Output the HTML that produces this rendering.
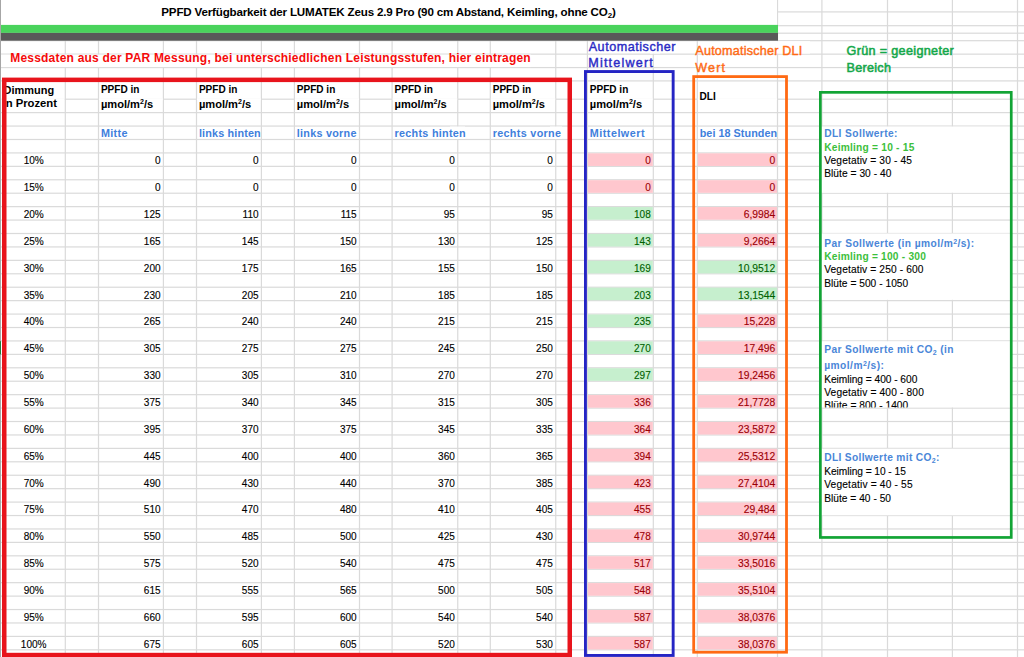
<!DOCTYPE html>
<html><head><meta charset="utf-8"><title>PPFD</title>
<style>html,body{margin:0;padding:0;background:#fff;overflow:hidden;width:1024px;height:657px}svg{display:block}text{font-family:"Liberation Sans",sans-serif}</style>
</head><body><svg width="1024" height="657" viewBox="0 0 1024 657" font-family="Liberation Sans, sans-serif"><rect x="0" y="0" width="1024" height="657" fill="#fff"/><rect x="777.50" y="11.30" width="246.50" height="1.2" fill="#DADADA"/><rect x="777.50" y="25.10" width="246.50" height="1.2" fill="#DADADA"/><rect x="1.00" y="32.60" width="1023.00" height="1.2" fill="#DADADA"/><rect x="1.00" y="40.10" width="1023.00" height="1.2" fill="#DADADA"/><rect x="1.00" y="53.54" width="1023.00" height="1.2" fill="#DADADA"/><rect x="1.00" y="66.97" width="1023.00" height="1.2" fill="#DADADA"/><rect x="1.00" y="80.30" width="1023.00" height="1.2" fill="#DADADA"/><rect x="1.00" y="98.60" width="1023.00" height="1.2" fill="#DADADA"/><rect x="1.00" y="112.03" width="1023.00" height="1.2" fill="#DADADA"/><rect x="1.00" y="125.46" width="1023.00" height="1.2" fill="#DADADA"/><rect x="1.00" y="138.89" width="1023.00" height="1.2" fill="#DADADA"/><rect x="1.00" y="152.32" width="1023.00" height="1.2" fill="#DADADA"/><rect x="1.00" y="165.75" width="1023.00" height="1.2" fill="#DADADA"/><rect x="1.00" y="179.18" width="1023.00" height="1.2" fill="#DADADA"/><rect x="1.00" y="192.61" width="1023.00" height="1.2" fill="#DADADA"/><rect x="1.00" y="206.04" width="1023.00" height="1.2" fill="#DADADA"/><rect x="1.00" y="219.47" width="1023.00" height="1.2" fill="#DADADA"/><rect x="1.00" y="232.90" width="1023.00" height="1.2" fill="#DADADA"/><rect x="1.00" y="246.33" width="1023.00" height="1.2" fill="#DADADA"/><rect x="1.00" y="259.76" width="1023.00" height="1.2" fill="#DADADA"/><rect x="1.00" y="273.19" width="1023.00" height="1.2" fill="#DADADA"/><rect x="1.00" y="286.62" width="1023.00" height="1.2" fill="#DADADA"/><rect x="1.00" y="300.05" width="1023.00" height="1.2" fill="#DADADA"/><rect x="1.00" y="313.48" width="1023.00" height="1.2" fill="#DADADA"/><rect x="1.00" y="326.91" width="1023.00" height="1.2" fill="#DADADA"/><rect x="1.00" y="340.34" width="1023.00" height="1.2" fill="#DADADA"/><rect x="1.00" y="353.77" width="1023.00" height="1.2" fill="#DADADA"/><rect x="1.00" y="367.20" width="1023.00" height="1.2" fill="#DADADA"/><rect x="1.00" y="380.63" width="1023.00" height="1.2" fill="#DADADA"/><rect x="1.00" y="394.06" width="1023.00" height="1.2" fill="#DADADA"/><rect x="1.00" y="407.49" width="1023.00" height="1.2" fill="#DADADA"/><rect x="1.00" y="420.92" width="1023.00" height="1.2" fill="#DADADA"/><rect x="1.00" y="434.35" width="1023.00" height="1.2" fill="#DADADA"/><rect x="1.00" y="447.78" width="1023.00" height="1.2" fill="#DADADA"/><rect x="1.00" y="461.21" width="1023.00" height="1.2" fill="#DADADA"/><rect x="1.00" y="474.64" width="1023.00" height="1.2" fill="#DADADA"/><rect x="1.00" y="488.07" width="1023.00" height="1.2" fill="#DADADA"/><rect x="1.00" y="501.50" width="1023.00" height="1.2" fill="#DADADA"/><rect x="1.00" y="514.93" width="1023.00" height="1.2" fill="#DADADA"/><rect x="1.00" y="528.36" width="1023.00" height="1.2" fill="#DADADA"/><rect x="1.00" y="541.79" width="1023.00" height="1.2" fill="#DADADA"/><rect x="1.00" y="555.22" width="1023.00" height="1.2" fill="#DADADA"/><rect x="1.00" y="568.65" width="1023.00" height="1.2" fill="#DADADA"/><rect x="1.00" y="582.08" width="1023.00" height="1.2" fill="#DADADA"/><rect x="1.00" y="595.51" width="1023.00" height="1.2" fill="#DADADA"/><rect x="1.00" y="608.94" width="1023.00" height="1.2" fill="#DADADA"/><rect x="1.00" y="622.37" width="1023.00" height="1.2" fill="#DADADA"/><rect x="1.00" y="635.80" width="1023.00" height="1.2" fill="#DADADA"/><rect x="1.00" y="649.23" width="1023.00" height="1.2" fill="#DADADA"/><rect x="64.70" y="0.00" width="1.2" height="657.00" fill="#DADADA"/><rect x="97.90" y="0.00" width="1.2" height="657.00" fill="#DADADA"/><rect x="162.80" y="0.00" width="1.2" height="657.00" fill="#DADADA"/><rect x="195.90" y="0.00" width="1.2" height="657.00" fill="#DADADA"/><rect x="260.80" y="0.00" width="1.2" height="657.00" fill="#DADADA"/><rect x="293.80" y="0.00" width="1.2" height="657.00" fill="#DADADA"/><rect x="358.90" y="0.00" width="1.2" height="657.00" fill="#DADADA"/><rect x="391.50" y="0.00" width="1.2" height="657.00" fill="#DADADA"/><rect x="457.15" y="0.00" width="1.2" height="657.00" fill="#DADADA"/><rect x="489.70" y="0.00" width="1.2" height="657.00" fill="#DADADA"/><rect x="555.15" y="0.00" width="1.2" height="657.00" fill="#DADADA"/><rect x="586.80" y="0.00" width="1.2" height="657.00" fill="#DADADA"/><rect x="652.70" y="0.00" width="1.2" height="657.00" fill="#DADADA"/><rect x="696.70" y="0.00" width="1.2" height="657.00" fill="#DADADA"/><rect x="776.90" y="0.00" width="1.2" height="657.00" fill="#DADADA"/><rect x="821.30" y="0.00" width="1.2" height="657.00" fill="#DADADA"/><rect x="886.90" y="0.00" width="1.2" height="657.00" fill="#DADADA"/><rect x="951.80" y="0.00" width="1.2" height="657.00" fill="#DADADA"/><rect x="1016.90" y="0.00" width="1.2" height="657.00" fill="#DADADA"/><rect x="1.00" y="0.00" width="776.00" height="25.70" fill="#fff"/><rect x="1.00" y="24.90" width="777.00" height="8.00" fill="#4AD35C"/><rect x="1.00" y="32.90" width="777.00" height="7.80" fill="#595959"/><rect x="1.00" y="54.64" width="530.00" height="12.43" fill="#fff"/><rect x="650.00" y="41.20" width="10.00" height="12.40" fill="#fff"/><rect x="770.00" y="41.20" width="40.00" height="12.40" fill="#fff"/><rect x="1.50" y="98.20" width="63.00" height="2.00" fill="#fff"/><rect x="99.00" y="98.20" width="63.90" height="2.00" fill="#fff"/><rect x="197.00" y="98.20" width="63.90" height="2.00" fill="#fff"/><rect x="294.90" y="98.20" width="64.10" height="2.00" fill="#fff"/><rect x="392.60" y="98.20" width="64.65" height="2.00" fill="#fff"/><rect x="490.80" y="98.20" width="64.45" height="2.00" fill="#fff"/><rect x="587.90" y="98.20" width="64.90" height="2.00" fill="#fff"/><rect x="697.80" y="98.20" width="79.20" height="2.00" fill="#fff"/><rect x="450.00" y="126.56" width="15.00" height="12.43" fill="#fff"/><rect x="550.00" y="126.56" width="12.00" height="12.43" fill="#fff"/><rect x="587.90" y="153.32" width="64.90" height="12.63" fill="#FFC7CE"/><rect x="697.80" y="153.32" width="79.20" height="12.63" fill="#FFC7CE"/><rect x="587.90" y="180.18" width="64.90" height="12.63" fill="#FFC7CE"/><rect x="697.80" y="180.18" width="79.20" height="12.63" fill="#FFC7CE"/><rect x="587.90" y="207.04" width="64.90" height="12.63" fill="#C6EFCE"/><rect x="697.80" y="207.04" width="79.20" height="12.63" fill="#FFC7CE"/><rect x="587.90" y="233.90" width="64.90" height="12.63" fill="#C6EFCE"/><rect x="697.80" y="233.90" width="79.20" height="12.63" fill="#FFC7CE"/><rect x="587.90" y="260.76" width="64.90" height="12.63" fill="#C6EFCE"/><rect x="697.80" y="260.76" width="79.20" height="12.63" fill="#C6EFCE"/><rect x="587.90" y="287.62" width="64.90" height="12.63" fill="#C6EFCE"/><rect x="697.80" y="287.62" width="79.20" height="12.63" fill="#C6EFCE"/><rect x="587.90" y="314.48" width="64.90" height="12.63" fill="#C6EFCE"/><rect x="697.80" y="314.48" width="79.20" height="12.63" fill="#FFC7CE"/><rect x="587.90" y="341.34" width="64.90" height="12.63" fill="#C6EFCE"/><rect x="697.80" y="341.34" width="79.20" height="12.63" fill="#FFC7CE"/><rect x="587.90" y="368.20" width="64.90" height="12.63" fill="#C6EFCE"/><rect x="697.80" y="368.20" width="79.20" height="12.63" fill="#FFC7CE"/><rect x="587.90" y="395.06" width="64.90" height="12.63" fill="#FFC7CE"/><rect x="697.80" y="395.06" width="79.20" height="12.63" fill="#FFC7CE"/><rect x="587.90" y="421.92" width="64.90" height="12.63" fill="#FFC7CE"/><rect x="697.80" y="421.92" width="79.20" height="12.63" fill="#FFC7CE"/><rect x="587.90" y="448.78" width="64.90" height="12.63" fill="#FFC7CE"/><rect x="697.80" y="448.78" width="79.20" height="12.63" fill="#FFC7CE"/><rect x="587.90" y="475.64" width="64.90" height="12.63" fill="#FFC7CE"/><rect x="697.80" y="475.64" width="79.20" height="12.63" fill="#FFC7CE"/><rect x="587.90" y="502.50" width="64.90" height="12.63" fill="#FFC7CE"/><rect x="697.80" y="502.50" width="79.20" height="12.63" fill="#FFC7CE"/><rect x="587.90" y="529.36" width="64.90" height="12.63" fill="#FFC7CE"/><rect x="697.80" y="529.36" width="79.20" height="12.63" fill="#FFC7CE"/><rect x="587.90" y="556.22" width="64.90" height="12.63" fill="#FFC7CE"/><rect x="697.80" y="556.22" width="79.20" height="12.63" fill="#FFC7CE"/><rect x="587.90" y="583.08" width="64.90" height="12.63" fill="#FFC7CE"/><rect x="697.80" y="583.08" width="79.20" height="12.63" fill="#FFC7CE"/><rect x="587.90" y="609.94" width="64.90" height="12.63" fill="#FFC7CE"/><rect x="697.80" y="609.94" width="79.20" height="12.63" fill="#FFC7CE"/><rect x="587.90" y="636.80" width="64.90" height="12.63" fill="#FFC7CE"/><rect x="697.80" y="636.80" width="79.20" height="12.63" fill="#FFC7CE"/><rect x="821.70" y="126.54" width="188.70" height="66.16" fill="#fff"/><rect x="821.70" y="233.50" width="188.70" height="66.30" fill="#fff"/><rect x="821.70" y="341.30" width="188.70" height="66.10" fill="#fff"/><rect x="821.70" y="448.70" width="188.70" height="66.60" fill="#fff"/><rect x="0.00" y="0.00" width="1.00" height="657.00" fill="#A6A6A6"/><rect x="0.00" y="341.20" width="1.00" height="13.20" fill="#1E7B3A"/><text x="161.30" y="15.90" font-size="11.6" font-weight="bold" fill="#000" textLength="454.50" lengthAdjust="spacing">PPFD Verfügbarkeit der LUMATEK Zeus 2.9 Pro (90 cm Abstand, Keimling, ohne CO<tspan font-size="8" dy="2">2</tspan><tspan dy="-2">)</tspan></text><text x="10.20" y="62.10" font-size="12.0" font-weight="bold" fill="#F50A0A" textLength="520.50" lengthAdjust="spacing">Messdaten aus der PAR Messung, bei unterschiedlichen Leistungsstufen, hier eintragen</text><text x="588.70" y="50.75" font-size="12.6" fill="#2A2AC4" textLength="86.80" lengthAdjust="spacing" stroke="#2A2AC4" stroke-width="0.4">Automatischer</text><text x="588.20" y="67.25" font-size="12.6" fill="#2A2AC4" textLength="64.60" lengthAdjust="spacing" stroke="#2A2AC4" stroke-width="0.4">Mittelwert</text><text x="695.30" y="54.60" font-size="12.6" fill="#FF6A13" textLength="107.00" lengthAdjust="spacing" stroke="#FF6A13" stroke-width="0.4">Automatischer DLI</text><text x="695.30" y="71.60" font-size="12.6" fill="#FF6A13" textLength="29.60" lengthAdjust="spacing" stroke="#FF6A13" stroke-width="0.4">Wert</text><text x="846.50" y="54.60" font-size="12.6" fill="#14A84A" textLength="107.30" lengthAdjust="spacing" stroke="#14A84A" stroke-width="0.55">Grün = geeigneter</text><text x="846.50" y="71.60" font-size="12.6" fill="#14A84A" textLength="44.40" lengthAdjust="spacing" stroke="#14A84A" stroke-width="0.55">Bereich</text><text x="3.60" y="94.06" font-size="10.1" font-weight="bold" fill="#000" textLength="50.50" lengthAdjust="spacingAndGlyphs">Dimmung</text><text x="2.50" y="107.30" font-size="10.1" font-weight="bold" fill="#000" textLength="54.50" lengthAdjust="spacingAndGlyphs">in Prozent</text><text x="100.90" y="92.80" font-size="10.1" font-weight="bold" fill="#000" textLength="38.50" lengthAdjust="spacingAndGlyphs">PPFD in</text><text x="100.90" y="107.70" font-size="10.1" font-weight="bold" fill="#000" textLength="52.30" lengthAdjust="spacingAndGlyphs">µmol/m<tspan font-size="6.4" dy="-3.6">2</tspan><tspan dy="3.6">/s</tspan></text><text x="198.90" y="92.80" font-size="10.1" font-weight="bold" fill="#000" textLength="38.50" lengthAdjust="spacingAndGlyphs">PPFD in</text><text x="198.90" y="107.70" font-size="10.1" font-weight="bold" fill="#000" textLength="52.30" lengthAdjust="spacingAndGlyphs">µmol/m<tspan font-size="6.4" dy="-3.6">2</tspan><tspan dy="3.6">/s</tspan></text><text x="296.80" y="92.80" font-size="10.1" font-weight="bold" fill="#000" textLength="38.50" lengthAdjust="spacingAndGlyphs">PPFD in</text><text x="296.80" y="107.70" font-size="10.1" font-weight="bold" fill="#000" textLength="52.30" lengthAdjust="spacingAndGlyphs">µmol/m<tspan font-size="6.4" dy="-3.6">2</tspan><tspan dy="3.6">/s</tspan></text><text x="394.50" y="92.80" font-size="10.1" font-weight="bold" fill="#000" textLength="38.50" lengthAdjust="spacingAndGlyphs">PPFD in</text><text x="394.50" y="107.70" font-size="10.1" font-weight="bold" fill="#000" textLength="52.30" lengthAdjust="spacingAndGlyphs">µmol/m<tspan font-size="6.4" dy="-3.6">2</tspan><tspan dy="3.6">/s</tspan></text><text x="492.70" y="92.80" font-size="10.1" font-weight="bold" fill="#000" textLength="38.50" lengthAdjust="spacingAndGlyphs">PPFD in</text><text x="492.70" y="107.70" font-size="10.1" font-weight="bold" fill="#000" textLength="52.30" lengthAdjust="spacingAndGlyphs">µmol/m<tspan font-size="6.4" dy="-3.6">2</tspan><tspan dy="3.6">/s</tspan></text><text x="589.80" y="92.80" font-size="10.1" font-weight="bold" fill="#000" textLength="38.50" lengthAdjust="spacingAndGlyphs">PPFD in</text><text x="589.80" y="107.70" font-size="10.1" font-weight="bold" fill="#000" textLength="52.30" lengthAdjust="spacingAndGlyphs">µmol/m<tspan font-size="6.4" dy="-3.6">2</tspan><tspan dy="3.6">/s</tspan></text><text x="699.50" y="99.70" font-size="10.1" font-weight="bold" fill="#000">DLI</text><text x="100.90" y="136.75" font-size="10.8" font-weight="bold" fill="#3F80DC" textLength="26.60" lengthAdjust="spacing">Mitte</text><text x="198.90" y="136.75" font-size="10.8" font-weight="bold" fill="#3F80DC" textLength="61.80" lengthAdjust="spacing">links hinten</text><text x="296.80" y="136.75" font-size="10.8" font-weight="bold" fill="#3F80DC" textLength="59.60" lengthAdjust="spacing">links vorne</text><text x="394.50" y="136.75" font-size="10.8" font-weight="bold" fill="#3F80DC" textLength="71.20" lengthAdjust="spacing">rechts hinten</text><text x="492.70" y="136.75" font-size="10.8" font-weight="bold" fill="#3F80DC" textLength="68.30" lengthAdjust="spacing">rechts vorne</text><text x="589.80" y="136.75" font-size="10.8" font-weight="bold" fill="#3F80DC" textLength="54.70" lengthAdjust="spacing">Mittelwert</text><text x="699.70" y="136.75" font-size="10.8" font-weight="bold" fill="#3F80DC" textLength="77.40" lengthAdjust="spacing">bei 18 Stunden</text><text x="33.70" y="164.25" font-size="10.6" fill="#000" text-anchor="middle" transform="translate(33.70,0) scale(0.95,1) translate(-33.70,0)" stroke="#000" stroke-width="0.12">10%</text><text x="160.60" y="164.25" font-size="10.6" fill="#000" text-anchor="end" transform="translate(160.60,0) scale(0.95,1) translate(-160.60,0)" stroke="#000" stroke-width="0.12">0</text><text x="258.60" y="164.25" font-size="10.6" fill="#000" text-anchor="end" transform="translate(258.60,0) scale(0.95,1) translate(-258.60,0)" stroke="#000" stroke-width="0.12">0</text><text x="356.70" y="164.25" font-size="10.6" fill="#000" text-anchor="end" transform="translate(356.70,0) scale(0.95,1) translate(-356.70,0)" stroke="#000" stroke-width="0.12">0</text><text x="454.90" y="164.25" font-size="10.6" fill="#000" text-anchor="end" transform="translate(454.90,0) scale(0.95,1) translate(-454.90,0)" stroke="#000" stroke-width="0.12">0</text><text x="552.90" y="164.25" font-size="10.6" fill="#000" text-anchor="end" transform="translate(552.90,0) scale(0.95,1) translate(-552.90,0)" stroke="#000" stroke-width="0.12">0</text><text x="650.80" y="164.25" font-size="10.6" fill="#9C0006" text-anchor="end" transform="translate(650.80,0) scale(0.95,1) translate(-650.80,0)" stroke="#9C0006" stroke-width="0.12">0</text><text x="775.30" y="164.25" font-size="10.6" fill="#9C0006" text-anchor="end" transform="translate(775.30,0) scale(0.975,1) translate(-775.30,0)" stroke="#9C0006" stroke-width="0.12">0</text><text x="33.70" y="191.11" font-size="10.6" fill="#000" text-anchor="middle" transform="translate(33.70,0) scale(0.95,1) translate(-33.70,0)" stroke="#000" stroke-width="0.12">15%</text><text x="160.60" y="191.11" font-size="10.6" fill="#000" text-anchor="end" transform="translate(160.60,0) scale(0.95,1) translate(-160.60,0)" stroke="#000" stroke-width="0.12">0</text><text x="258.60" y="191.11" font-size="10.6" fill="#000" text-anchor="end" transform="translate(258.60,0) scale(0.95,1) translate(-258.60,0)" stroke="#000" stroke-width="0.12">0</text><text x="356.70" y="191.11" font-size="10.6" fill="#000" text-anchor="end" transform="translate(356.70,0) scale(0.95,1) translate(-356.70,0)" stroke="#000" stroke-width="0.12">0</text><text x="454.90" y="191.11" font-size="10.6" fill="#000" text-anchor="end" transform="translate(454.90,0) scale(0.95,1) translate(-454.90,0)" stroke="#000" stroke-width="0.12">0</text><text x="552.90" y="191.11" font-size="10.6" fill="#000" text-anchor="end" transform="translate(552.90,0) scale(0.95,1) translate(-552.90,0)" stroke="#000" stroke-width="0.12">0</text><text x="650.80" y="191.11" font-size="10.6" fill="#9C0006" text-anchor="end" transform="translate(650.80,0) scale(0.95,1) translate(-650.80,0)" stroke="#9C0006" stroke-width="0.12">0</text><text x="775.30" y="191.11" font-size="10.6" fill="#9C0006" text-anchor="end" transform="translate(775.30,0) scale(0.975,1) translate(-775.30,0)" stroke="#9C0006" stroke-width="0.12">0</text><text x="33.70" y="217.97" font-size="10.6" fill="#000" text-anchor="middle" transform="translate(33.70,0) scale(0.95,1) translate(-33.70,0)" stroke="#000" stroke-width="0.12">20%</text><text x="160.60" y="217.97" font-size="10.6" fill="#000" text-anchor="end" transform="translate(160.60,0) scale(0.95,1) translate(-160.60,0)" stroke="#000" stroke-width="0.12">125</text><text x="258.60" y="217.97" font-size="10.6" fill="#000" text-anchor="end" transform="translate(258.60,0) scale(0.95,1) translate(-258.60,0)" stroke="#000" stroke-width="0.12">110</text><text x="356.70" y="217.97" font-size="10.6" fill="#000" text-anchor="end" transform="translate(356.70,0) scale(0.95,1) translate(-356.70,0)" stroke="#000" stroke-width="0.12">115</text><text x="454.90" y="217.97" font-size="10.6" fill="#000" text-anchor="end" transform="translate(454.90,0) scale(0.95,1) translate(-454.90,0)" stroke="#000" stroke-width="0.12">95</text><text x="552.90" y="217.97" font-size="10.6" fill="#000" text-anchor="end" transform="translate(552.90,0) scale(0.95,1) translate(-552.90,0)" stroke="#000" stroke-width="0.12">95</text><text x="650.80" y="217.97" font-size="10.6" fill="#006100" text-anchor="end" transform="translate(650.80,0) scale(0.95,1) translate(-650.80,0)" stroke="#006100" stroke-width="0.12">108</text><text x="775.30" y="217.97" font-size="10.6" fill="#9C0006" text-anchor="end" transform="translate(775.30,0) scale(0.975,1) translate(-775.30,0)" stroke="#9C0006" stroke-width="0.12">6,9984</text><text x="33.70" y="244.83" font-size="10.6" fill="#000" text-anchor="middle" transform="translate(33.70,0) scale(0.95,1) translate(-33.70,0)" stroke="#000" stroke-width="0.12">25%</text><text x="160.60" y="244.83" font-size="10.6" fill="#000" text-anchor="end" transform="translate(160.60,0) scale(0.95,1) translate(-160.60,0)" stroke="#000" stroke-width="0.12">165</text><text x="258.60" y="244.83" font-size="10.6" fill="#000" text-anchor="end" transform="translate(258.60,0) scale(0.95,1) translate(-258.60,0)" stroke="#000" stroke-width="0.12">145</text><text x="356.70" y="244.83" font-size="10.6" fill="#000" text-anchor="end" transform="translate(356.70,0) scale(0.95,1) translate(-356.70,0)" stroke="#000" stroke-width="0.12">150</text><text x="454.90" y="244.83" font-size="10.6" fill="#000" text-anchor="end" transform="translate(454.90,0) scale(0.95,1) translate(-454.90,0)" stroke="#000" stroke-width="0.12">130</text><text x="552.90" y="244.83" font-size="10.6" fill="#000" text-anchor="end" transform="translate(552.90,0) scale(0.95,1) translate(-552.90,0)" stroke="#000" stroke-width="0.12">125</text><text x="650.80" y="244.83" font-size="10.6" fill="#006100" text-anchor="end" transform="translate(650.80,0) scale(0.95,1) translate(-650.80,0)" stroke="#006100" stroke-width="0.12">143</text><text x="775.30" y="244.83" font-size="10.6" fill="#9C0006" text-anchor="end" transform="translate(775.30,0) scale(0.975,1) translate(-775.30,0)" stroke="#9C0006" stroke-width="0.12">9,2664</text><text x="33.70" y="271.69" font-size="10.6" fill="#000" text-anchor="middle" transform="translate(33.70,0) scale(0.95,1) translate(-33.70,0)" stroke="#000" stroke-width="0.12">30%</text><text x="160.60" y="271.69" font-size="10.6" fill="#000" text-anchor="end" transform="translate(160.60,0) scale(0.95,1) translate(-160.60,0)" stroke="#000" stroke-width="0.12">200</text><text x="258.60" y="271.69" font-size="10.6" fill="#000" text-anchor="end" transform="translate(258.60,0) scale(0.95,1) translate(-258.60,0)" stroke="#000" stroke-width="0.12">175</text><text x="356.70" y="271.69" font-size="10.6" fill="#000" text-anchor="end" transform="translate(356.70,0) scale(0.95,1) translate(-356.70,0)" stroke="#000" stroke-width="0.12">165</text><text x="454.90" y="271.69" font-size="10.6" fill="#000" text-anchor="end" transform="translate(454.90,0) scale(0.95,1) translate(-454.90,0)" stroke="#000" stroke-width="0.12">155</text><text x="552.90" y="271.69" font-size="10.6" fill="#000" text-anchor="end" transform="translate(552.90,0) scale(0.95,1) translate(-552.90,0)" stroke="#000" stroke-width="0.12">150</text><text x="650.80" y="271.69" font-size="10.6" fill="#006100" text-anchor="end" transform="translate(650.80,0) scale(0.95,1) translate(-650.80,0)" stroke="#006100" stroke-width="0.12">169</text><text x="775.30" y="271.69" font-size="10.6" fill="#006100" text-anchor="end" transform="translate(775.30,0) scale(0.975,1) translate(-775.30,0)" stroke="#006100" stroke-width="0.12">10,9512</text><text x="33.70" y="298.55" font-size="10.6" fill="#000" text-anchor="middle" transform="translate(33.70,0) scale(0.95,1) translate(-33.70,0)" stroke="#000" stroke-width="0.12">35%</text><text x="160.60" y="298.55" font-size="10.6" fill="#000" text-anchor="end" transform="translate(160.60,0) scale(0.95,1) translate(-160.60,0)" stroke="#000" stroke-width="0.12">230</text><text x="258.60" y="298.55" font-size="10.6" fill="#000" text-anchor="end" transform="translate(258.60,0) scale(0.95,1) translate(-258.60,0)" stroke="#000" stroke-width="0.12">205</text><text x="356.70" y="298.55" font-size="10.6" fill="#000" text-anchor="end" transform="translate(356.70,0) scale(0.95,1) translate(-356.70,0)" stroke="#000" stroke-width="0.12">210</text><text x="454.90" y="298.55" font-size="10.6" fill="#000" text-anchor="end" transform="translate(454.90,0) scale(0.95,1) translate(-454.90,0)" stroke="#000" stroke-width="0.12">185</text><text x="552.90" y="298.55" font-size="10.6" fill="#000" text-anchor="end" transform="translate(552.90,0) scale(0.95,1) translate(-552.90,0)" stroke="#000" stroke-width="0.12">185</text><text x="650.80" y="298.55" font-size="10.6" fill="#006100" text-anchor="end" transform="translate(650.80,0) scale(0.95,1) translate(-650.80,0)" stroke="#006100" stroke-width="0.12">203</text><text x="775.30" y="298.55" font-size="10.6" fill="#006100" text-anchor="end" transform="translate(775.30,0) scale(0.975,1) translate(-775.30,0)" stroke="#006100" stroke-width="0.12">13,1544</text><text x="33.70" y="325.41" font-size="10.6" fill="#000" text-anchor="middle" transform="translate(33.70,0) scale(0.95,1) translate(-33.70,0)" stroke="#000" stroke-width="0.12">40%</text><text x="160.60" y="325.41" font-size="10.6" fill="#000" text-anchor="end" transform="translate(160.60,0) scale(0.95,1) translate(-160.60,0)" stroke="#000" stroke-width="0.12">265</text><text x="258.60" y="325.41" font-size="10.6" fill="#000" text-anchor="end" transform="translate(258.60,0) scale(0.95,1) translate(-258.60,0)" stroke="#000" stroke-width="0.12">240</text><text x="356.70" y="325.41" font-size="10.6" fill="#000" text-anchor="end" transform="translate(356.70,0) scale(0.95,1) translate(-356.70,0)" stroke="#000" stroke-width="0.12">240</text><text x="454.90" y="325.41" font-size="10.6" fill="#000" text-anchor="end" transform="translate(454.90,0) scale(0.95,1) translate(-454.90,0)" stroke="#000" stroke-width="0.12">215</text><text x="552.90" y="325.41" font-size="10.6" fill="#000" text-anchor="end" transform="translate(552.90,0) scale(0.95,1) translate(-552.90,0)" stroke="#000" stroke-width="0.12">215</text><text x="650.80" y="325.41" font-size="10.6" fill="#006100" text-anchor="end" transform="translate(650.80,0) scale(0.95,1) translate(-650.80,0)" stroke="#006100" stroke-width="0.12">235</text><text x="775.30" y="325.41" font-size="10.6" fill="#9C0006" text-anchor="end" transform="translate(775.30,0) scale(0.975,1) translate(-775.30,0)" stroke="#9C0006" stroke-width="0.12">15,228</text><text x="33.70" y="352.27" font-size="10.6" fill="#000" text-anchor="middle" transform="translate(33.70,0) scale(0.95,1) translate(-33.70,0)" stroke="#000" stroke-width="0.12">45%</text><text x="160.60" y="352.27" font-size="10.6" fill="#000" text-anchor="end" transform="translate(160.60,0) scale(0.95,1) translate(-160.60,0)" stroke="#000" stroke-width="0.12">305</text><text x="258.60" y="352.27" font-size="10.6" fill="#000" text-anchor="end" transform="translate(258.60,0) scale(0.95,1) translate(-258.60,0)" stroke="#000" stroke-width="0.12">275</text><text x="356.70" y="352.27" font-size="10.6" fill="#000" text-anchor="end" transform="translate(356.70,0) scale(0.95,1) translate(-356.70,0)" stroke="#000" stroke-width="0.12">275</text><text x="454.90" y="352.27" font-size="10.6" fill="#000" text-anchor="end" transform="translate(454.90,0) scale(0.95,1) translate(-454.90,0)" stroke="#000" stroke-width="0.12">245</text><text x="552.90" y="352.27" font-size="10.6" fill="#000" text-anchor="end" transform="translate(552.90,0) scale(0.95,1) translate(-552.90,0)" stroke="#000" stroke-width="0.12">250</text><text x="650.80" y="352.27" font-size="10.6" fill="#006100" text-anchor="end" transform="translate(650.80,0) scale(0.95,1) translate(-650.80,0)" stroke="#006100" stroke-width="0.12">270</text><text x="775.30" y="352.27" font-size="10.6" fill="#9C0006" text-anchor="end" transform="translate(775.30,0) scale(0.975,1) translate(-775.30,0)" stroke="#9C0006" stroke-width="0.12">17,496</text><text x="33.70" y="379.13" font-size="10.6" fill="#000" text-anchor="middle" transform="translate(33.70,0) scale(0.95,1) translate(-33.70,0)" stroke="#000" stroke-width="0.12">50%</text><text x="160.60" y="379.13" font-size="10.6" fill="#000" text-anchor="end" transform="translate(160.60,0) scale(0.95,1) translate(-160.60,0)" stroke="#000" stroke-width="0.12">330</text><text x="258.60" y="379.13" font-size="10.6" fill="#000" text-anchor="end" transform="translate(258.60,0) scale(0.95,1) translate(-258.60,0)" stroke="#000" stroke-width="0.12">305</text><text x="356.70" y="379.13" font-size="10.6" fill="#000" text-anchor="end" transform="translate(356.70,0) scale(0.95,1) translate(-356.70,0)" stroke="#000" stroke-width="0.12">310</text><text x="454.90" y="379.13" font-size="10.6" fill="#000" text-anchor="end" transform="translate(454.90,0) scale(0.95,1) translate(-454.90,0)" stroke="#000" stroke-width="0.12">270</text><text x="552.90" y="379.13" font-size="10.6" fill="#000" text-anchor="end" transform="translate(552.90,0) scale(0.95,1) translate(-552.90,0)" stroke="#000" stroke-width="0.12">270</text><text x="650.80" y="379.13" font-size="10.6" fill="#006100" text-anchor="end" transform="translate(650.80,0) scale(0.95,1) translate(-650.80,0)" stroke="#006100" stroke-width="0.12">297</text><text x="775.30" y="379.13" font-size="10.6" fill="#9C0006" text-anchor="end" transform="translate(775.30,0) scale(0.975,1) translate(-775.30,0)" stroke="#9C0006" stroke-width="0.12">19,2456</text><text x="33.70" y="405.99" font-size="10.6" fill="#000" text-anchor="middle" transform="translate(33.70,0) scale(0.95,1) translate(-33.70,0)" stroke="#000" stroke-width="0.12">55%</text><text x="160.60" y="405.99" font-size="10.6" fill="#000" text-anchor="end" transform="translate(160.60,0) scale(0.95,1) translate(-160.60,0)" stroke="#000" stroke-width="0.12">375</text><text x="258.60" y="405.99" font-size="10.6" fill="#000" text-anchor="end" transform="translate(258.60,0) scale(0.95,1) translate(-258.60,0)" stroke="#000" stroke-width="0.12">340</text><text x="356.70" y="405.99" font-size="10.6" fill="#000" text-anchor="end" transform="translate(356.70,0) scale(0.95,1) translate(-356.70,0)" stroke="#000" stroke-width="0.12">345</text><text x="454.90" y="405.99" font-size="10.6" fill="#000" text-anchor="end" transform="translate(454.90,0) scale(0.95,1) translate(-454.90,0)" stroke="#000" stroke-width="0.12">315</text><text x="552.90" y="405.99" font-size="10.6" fill="#000" text-anchor="end" transform="translate(552.90,0) scale(0.95,1) translate(-552.90,0)" stroke="#000" stroke-width="0.12">305</text><text x="650.80" y="405.99" font-size="10.6" fill="#9C0006" text-anchor="end" transform="translate(650.80,0) scale(0.95,1) translate(-650.80,0)" stroke="#9C0006" stroke-width="0.12">336</text><text x="775.30" y="405.99" font-size="10.6" fill="#9C0006" text-anchor="end" transform="translate(775.30,0) scale(0.975,1) translate(-775.30,0)" stroke="#9C0006" stroke-width="0.12">21,7728</text><text x="33.70" y="432.85" font-size="10.6" fill="#000" text-anchor="middle" transform="translate(33.70,0) scale(0.95,1) translate(-33.70,0)" stroke="#000" stroke-width="0.12">60%</text><text x="160.60" y="432.85" font-size="10.6" fill="#000" text-anchor="end" transform="translate(160.60,0) scale(0.95,1) translate(-160.60,0)" stroke="#000" stroke-width="0.12">395</text><text x="258.60" y="432.85" font-size="10.6" fill="#000" text-anchor="end" transform="translate(258.60,0) scale(0.95,1) translate(-258.60,0)" stroke="#000" stroke-width="0.12">370</text><text x="356.70" y="432.85" font-size="10.6" fill="#000" text-anchor="end" transform="translate(356.70,0) scale(0.95,1) translate(-356.70,0)" stroke="#000" stroke-width="0.12">375</text><text x="454.90" y="432.85" font-size="10.6" fill="#000" text-anchor="end" transform="translate(454.90,0) scale(0.95,1) translate(-454.90,0)" stroke="#000" stroke-width="0.12">345</text><text x="552.90" y="432.85" font-size="10.6" fill="#000" text-anchor="end" transform="translate(552.90,0) scale(0.95,1) translate(-552.90,0)" stroke="#000" stroke-width="0.12">335</text><text x="650.80" y="432.85" font-size="10.6" fill="#9C0006" text-anchor="end" transform="translate(650.80,0) scale(0.95,1) translate(-650.80,0)" stroke="#9C0006" stroke-width="0.12">364</text><text x="775.30" y="432.85" font-size="10.6" fill="#9C0006" text-anchor="end" transform="translate(775.30,0) scale(0.975,1) translate(-775.30,0)" stroke="#9C0006" stroke-width="0.12">23,5872</text><text x="33.70" y="459.71" font-size="10.6" fill="#000" text-anchor="middle" transform="translate(33.70,0) scale(0.95,1) translate(-33.70,0)" stroke="#000" stroke-width="0.12">65%</text><text x="160.60" y="459.71" font-size="10.6" fill="#000" text-anchor="end" transform="translate(160.60,0) scale(0.95,1) translate(-160.60,0)" stroke="#000" stroke-width="0.12">445</text><text x="258.60" y="459.71" font-size="10.6" fill="#000" text-anchor="end" transform="translate(258.60,0) scale(0.95,1) translate(-258.60,0)" stroke="#000" stroke-width="0.12">400</text><text x="356.70" y="459.71" font-size="10.6" fill="#000" text-anchor="end" transform="translate(356.70,0) scale(0.95,1) translate(-356.70,0)" stroke="#000" stroke-width="0.12">400</text><text x="454.90" y="459.71" font-size="10.6" fill="#000" text-anchor="end" transform="translate(454.90,0) scale(0.95,1) translate(-454.90,0)" stroke="#000" stroke-width="0.12">360</text><text x="552.90" y="459.71" font-size="10.6" fill="#000" text-anchor="end" transform="translate(552.90,0) scale(0.95,1) translate(-552.90,0)" stroke="#000" stroke-width="0.12">365</text><text x="650.80" y="459.71" font-size="10.6" fill="#9C0006" text-anchor="end" transform="translate(650.80,0) scale(0.95,1) translate(-650.80,0)" stroke="#9C0006" stroke-width="0.12">394</text><text x="775.30" y="459.71" font-size="10.6" fill="#9C0006" text-anchor="end" transform="translate(775.30,0) scale(0.975,1) translate(-775.30,0)" stroke="#9C0006" stroke-width="0.12">25,5312</text><text x="33.70" y="486.57" font-size="10.6" fill="#000" text-anchor="middle" transform="translate(33.70,0) scale(0.95,1) translate(-33.70,0)" stroke="#000" stroke-width="0.12">70%</text><text x="160.60" y="486.57" font-size="10.6" fill="#000" text-anchor="end" transform="translate(160.60,0) scale(0.95,1) translate(-160.60,0)" stroke="#000" stroke-width="0.12">490</text><text x="258.60" y="486.57" font-size="10.6" fill="#000" text-anchor="end" transform="translate(258.60,0) scale(0.95,1) translate(-258.60,0)" stroke="#000" stroke-width="0.12">430</text><text x="356.70" y="486.57" font-size="10.6" fill="#000" text-anchor="end" transform="translate(356.70,0) scale(0.95,1) translate(-356.70,0)" stroke="#000" stroke-width="0.12">440</text><text x="454.90" y="486.57" font-size="10.6" fill="#000" text-anchor="end" transform="translate(454.90,0) scale(0.95,1) translate(-454.90,0)" stroke="#000" stroke-width="0.12">370</text><text x="552.90" y="486.57" font-size="10.6" fill="#000" text-anchor="end" transform="translate(552.90,0) scale(0.95,1) translate(-552.90,0)" stroke="#000" stroke-width="0.12">385</text><text x="650.80" y="486.57" font-size="10.6" fill="#9C0006" text-anchor="end" transform="translate(650.80,0) scale(0.95,1) translate(-650.80,0)" stroke="#9C0006" stroke-width="0.12">423</text><text x="775.30" y="486.57" font-size="10.6" fill="#9C0006" text-anchor="end" transform="translate(775.30,0) scale(0.975,1) translate(-775.30,0)" stroke="#9C0006" stroke-width="0.12">27,4104</text><text x="33.70" y="513.43" font-size="10.6" fill="#000" text-anchor="middle" transform="translate(33.70,0) scale(0.95,1) translate(-33.70,0)" stroke="#000" stroke-width="0.12">75%</text><text x="160.60" y="513.43" font-size="10.6" fill="#000" text-anchor="end" transform="translate(160.60,0) scale(0.95,1) translate(-160.60,0)" stroke="#000" stroke-width="0.12">510</text><text x="258.60" y="513.43" font-size="10.6" fill="#000" text-anchor="end" transform="translate(258.60,0) scale(0.95,1) translate(-258.60,0)" stroke="#000" stroke-width="0.12">470</text><text x="356.70" y="513.43" font-size="10.6" fill="#000" text-anchor="end" transform="translate(356.70,0) scale(0.95,1) translate(-356.70,0)" stroke="#000" stroke-width="0.12">480</text><text x="454.90" y="513.43" font-size="10.6" fill="#000" text-anchor="end" transform="translate(454.90,0) scale(0.95,1) translate(-454.90,0)" stroke="#000" stroke-width="0.12">410</text><text x="552.90" y="513.43" font-size="10.6" fill="#000" text-anchor="end" transform="translate(552.90,0) scale(0.95,1) translate(-552.90,0)" stroke="#000" stroke-width="0.12">405</text><text x="650.80" y="513.43" font-size="10.6" fill="#9C0006" text-anchor="end" transform="translate(650.80,0) scale(0.95,1) translate(-650.80,0)" stroke="#9C0006" stroke-width="0.12">455</text><text x="775.30" y="513.43" font-size="10.6" fill="#9C0006" text-anchor="end" transform="translate(775.30,0) scale(0.975,1) translate(-775.30,0)" stroke="#9C0006" stroke-width="0.12">29,484</text><text x="33.70" y="540.29" font-size="10.6" fill="#000" text-anchor="middle" transform="translate(33.70,0) scale(0.95,1) translate(-33.70,0)" stroke="#000" stroke-width="0.12">80%</text><text x="160.60" y="540.29" font-size="10.6" fill="#000" text-anchor="end" transform="translate(160.60,0) scale(0.95,1) translate(-160.60,0)" stroke="#000" stroke-width="0.12">550</text><text x="258.60" y="540.29" font-size="10.6" fill="#000" text-anchor="end" transform="translate(258.60,0) scale(0.95,1) translate(-258.60,0)" stroke="#000" stroke-width="0.12">485</text><text x="356.70" y="540.29" font-size="10.6" fill="#000" text-anchor="end" transform="translate(356.70,0) scale(0.95,1) translate(-356.70,0)" stroke="#000" stroke-width="0.12">500</text><text x="454.90" y="540.29" font-size="10.6" fill="#000" text-anchor="end" transform="translate(454.90,0) scale(0.95,1) translate(-454.90,0)" stroke="#000" stroke-width="0.12">425</text><text x="552.90" y="540.29" font-size="10.6" fill="#000" text-anchor="end" transform="translate(552.90,0) scale(0.95,1) translate(-552.90,0)" stroke="#000" stroke-width="0.12">430</text><text x="650.80" y="540.29" font-size="10.6" fill="#9C0006" text-anchor="end" transform="translate(650.80,0) scale(0.95,1) translate(-650.80,0)" stroke="#9C0006" stroke-width="0.12">478</text><text x="775.30" y="540.29" font-size="10.6" fill="#9C0006" text-anchor="end" transform="translate(775.30,0) scale(0.975,1) translate(-775.30,0)" stroke="#9C0006" stroke-width="0.12">30,9744</text><text x="33.70" y="567.15" font-size="10.6" fill="#000" text-anchor="middle" transform="translate(33.70,0) scale(0.95,1) translate(-33.70,0)" stroke="#000" stroke-width="0.12">85%</text><text x="160.60" y="567.15" font-size="10.6" fill="#000" text-anchor="end" transform="translate(160.60,0) scale(0.95,1) translate(-160.60,0)" stroke="#000" stroke-width="0.12">575</text><text x="258.60" y="567.15" font-size="10.6" fill="#000" text-anchor="end" transform="translate(258.60,0) scale(0.95,1) translate(-258.60,0)" stroke="#000" stroke-width="0.12">520</text><text x="356.70" y="567.15" font-size="10.6" fill="#000" text-anchor="end" transform="translate(356.70,0) scale(0.95,1) translate(-356.70,0)" stroke="#000" stroke-width="0.12">540</text><text x="454.90" y="567.15" font-size="10.6" fill="#000" text-anchor="end" transform="translate(454.90,0) scale(0.95,1) translate(-454.90,0)" stroke="#000" stroke-width="0.12">475</text><text x="552.90" y="567.15" font-size="10.6" fill="#000" text-anchor="end" transform="translate(552.90,0) scale(0.95,1) translate(-552.90,0)" stroke="#000" stroke-width="0.12">475</text><text x="650.80" y="567.15" font-size="10.6" fill="#9C0006" text-anchor="end" transform="translate(650.80,0) scale(0.95,1) translate(-650.80,0)" stroke="#9C0006" stroke-width="0.12">517</text><text x="775.30" y="567.15" font-size="10.6" fill="#9C0006" text-anchor="end" transform="translate(775.30,0) scale(0.975,1) translate(-775.30,0)" stroke="#9C0006" stroke-width="0.12">33,5016</text><text x="33.70" y="594.01" font-size="10.6" fill="#000" text-anchor="middle" transform="translate(33.70,0) scale(0.95,1) translate(-33.70,0)" stroke="#000" stroke-width="0.12">90%</text><text x="160.60" y="594.01" font-size="10.6" fill="#000" text-anchor="end" transform="translate(160.60,0) scale(0.95,1) translate(-160.60,0)" stroke="#000" stroke-width="0.12">615</text><text x="258.60" y="594.01" font-size="10.6" fill="#000" text-anchor="end" transform="translate(258.60,0) scale(0.95,1) translate(-258.60,0)" stroke="#000" stroke-width="0.12">555</text><text x="356.70" y="594.01" font-size="10.6" fill="#000" text-anchor="end" transform="translate(356.70,0) scale(0.95,1) translate(-356.70,0)" stroke="#000" stroke-width="0.12">565</text><text x="454.90" y="594.01" font-size="10.6" fill="#000" text-anchor="end" transform="translate(454.90,0) scale(0.95,1) translate(-454.90,0)" stroke="#000" stroke-width="0.12">500</text><text x="552.90" y="594.01" font-size="10.6" fill="#000" text-anchor="end" transform="translate(552.90,0) scale(0.95,1) translate(-552.90,0)" stroke="#000" stroke-width="0.12">505</text><text x="650.80" y="594.01" font-size="10.6" fill="#9C0006" text-anchor="end" transform="translate(650.80,0) scale(0.95,1) translate(-650.80,0)" stroke="#9C0006" stroke-width="0.12">548</text><text x="775.30" y="594.01" font-size="10.6" fill="#9C0006" text-anchor="end" transform="translate(775.30,0) scale(0.975,1) translate(-775.30,0)" stroke="#9C0006" stroke-width="0.12">35,5104</text><text x="33.70" y="620.87" font-size="10.6" fill="#000" text-anchor="middle" transform="translate(33.70,0) scale(0.95,1) translate(-33.70,0)" stroke="#000" stroke-width="0.12">95%</text><text x="160.60" y="620.87" font-size="10.6" fill="#000" text-anchor="end" transform="translate(160.60,0) scale(0.95,1) translate(-160.60,0)" stroke="#000" stroke-width="0.12">660</text><text x="258.60" y="620.87" font-size="10.6" fill="#000" text-anchor="end" transform="translate(258.60,0) scale(0.95,1) translate(-258.60,0)" stroke="#000" stroke-width="0.12">595</text><text x="356.70" y="620.87" font-size="10.6" fill="#000" text-anchor="end" transform="translate(356.70,0) scale(0.95,1) translate(-356.70,0)" stroke="#000" stroke-width="0.12">600</text><text x="454.90" y="620.87" font-size="10.6" fill="#000" text-anchor="end" transform="translate(454.90,0) scale(0.95,1) translate(-454.90,0)" stroke="#000" stroke-width="0.12">540</text><text x="552.90" y="620.87" font-size="10.6" fill="#000" text-anchor="end" transform="translate(552.90,0) scale(0.95,1) translate(-552.90,0)" stroke="#000" stroke-width="0.12">540</text><text x="650.80" y="620.87" font-size="10.6" fill="#9C0006" text-anchor="end" transform="translate(650.80,0) scale(0.95,1) translate(-650.80,0)" stroke="#9C0006" stroke-width="0.12">587</text><text x="775.30" y="620.87" font-size="10.6" fill="#9C0006" text-anchor="end" transform="translate(775.30,0) scale(0.975,1) translate(-775.30,0)" stroke="#9C0006" stroke-width="0.12">38,0376</text><text x="33.70" y="647.73" font-size="10.6" fill="#000" text-anchor="middle" transform="translate(33.70,0) scale(0.95,1) translate(-33.70,0)" stroke="#000" stroke-width="0.12">100%</text><text x="160.60" y="647.73" font-size="10.6" fill="#000" text-anchor="end" transform="translate(160.60,0) scale(0.95,1) translate(-160.60,0)" stroke="#000" stroke-width="0.12">675</text><text x="258.60" y="647.73" font-size="10.6" fill="#000" text-anchor="end" transform="translate(258.60,0) scale(0.95,1) translate(-258.60,0)" stroke="#000" stroke-width="0.12">605</text><text x="356.70" y="647.73" font-size="10.6" fill="#000" text-anchor="end" transform="translate(356.70,0) scale(0.95,1) translate(-356.70,0)" stroke="#000" stroke-width="0.12">605</text><text x="454.90" y="647.73" font-size="10.6" fill="#000" text-anchor="end" transform="translate(454.90,0) scale(0.95,1) translate(-454.90,0)" stroke="#000" stroke-width="0.12">520</text><text x="552.90" y="647.73" font-size="10.6" fill="#000" text-anchor="end" transform="translate(552.90,0) scale(0.95,1) translate(-552.90,0)" stroke="#000" stroke-width="0.12">530</text><text x="650.80" y="647.73" font-size="10.6" fill="#9C0006" text-anchor="end" transform="translate(650.80,0) scale(0.95,1) translate(-650.80,0)" stroke="#9C0006" stroke-width="0.12">587</text><text x="775.30" y="647.73" font-size="10.6" fill="#9C0006" text-anchor="end" transform="translate(775.30,0) scale(0.975,1) translate(-775.30,0)" stroke="#9C0006" stroke-width="0.12">38,0376</text><text x="824.20" y="137.30" font-size="10.2" font-weight="bold" fill="#4A86D8" textLength="73.30" lengthAdjust="spacing">DLI Sollwerte:</text><text x="824.20" y="151.00" font-size="10.2" font-weight="bold" fill="#3CC03C" textLength="90.10" lengthAdjust="spacing">Keimling = 10 - 15</text><text x="824.20" y="164.10" font-size="10.2" fill="#000" textLength="87.70" lengthAdjust="spacing" stroke="#000" stroke-width="0.12">Vegetativ = 30 - 45</text><text x="824.20" y="177.30" font-size="10.2" fill="#000" textLength="67.20" lengthAdjust="spacing" stroke="#000" stroke-width="0.12">Blüte = 30 - 40</text><text x="824.20" y="247.00" font-size="10.2" font-weight="bold" fill="#4A86D8" textLength="149.90" lengthAdjust="spacing">Par Sollwerte (in µmol/m<tspan font-size="7" dy="-3.5">2</tspan><tspan dy="3.5">/s):</tspan></text><text x="824.20" y="260.00" font-size="10.2" font-weight="bold" fill="#3CC03C" textLength="101.60" lengthAdjust="spacing">Keimling = 100 - 300</text><text x="824.20" y="273.10" font-size="10.2" fill="#000" textLength="99.30" lengthAdjust="spacing" stroke="#000" stroke-width="0.12">Vegetativ = 250 - 600</text><text x="824.20" y="286.60" font-size="10.2" fill="#000" textLength="84.00" lengthAdjust="spacing" stroke="#000" stroke-width="0.12">Blüte = 500 - 1050</text><text x="824.20" y="353.00" font-size="10.2" font-weight="bold" fill="#4A86D8" textLength="129.30" lengthAdjust="spacing">Par Sollwerte mit CO<tspan font-size="7" dy="2">2</tspan><tspan dy="-2"> (in</tspan></text><text x="824.20" y="369.10" font-size="10.2" font-weight="bold" fill="#4A86D8" textLength="59.80" lengthAdjust="spacing">µmol/m<tspan font-size="7" dy="-3.5">2</tspan><tspan dy="3.5">/s):</tspan></text><text x="824.20" y="382.70" font-size="10.2" fill="#000" textLength="93.10" lengthAdjust="spacing" stroke="#000" stroke-width="0.12">Keimling = 400 - 600</text><text x="824.20" y="395.70" font-size="10.2" fill="#000" textLength="99.60" lengthAdjust="spacing" stroke="#000" stroke-width="0.12">Vegetativ = 400 - 800</text><clipPath id="cb3"><rect x="821" y="341" width="190" height="66.6"/></clipPath><g clip-path="url(#cb3)"><text x="824.20" y="409.20" font-size="10.2" fill="#000" textLength="84.00" lengthAdjust="spacing" stroke="#000" stroke-width="0.12">Blüte = 800 - 1400</text></g><text x="824.20" y="460.70" font-size="10.2" font-weight="bold" fill="#4A86D8" textLength="115.20" lengthAdjust="spacing">DLI Sollwerte mit CO<tspan font-size="7" dy="2">2</tspan><tspan dy="-2">:</tspan></text><text x="824.20" y="474.60" font-size="10.2" fill="#000" textLength="81.60" lengthAdjust="spacing" stroke="#000" stroke-width="0.12">Keimling = 10 - 15</text><text x="824.20" y="487.90" font-size="10.2" fill="#000" textLength="88.40" lengthAdjust="spacing" stroke="#000" stroke-width="0.12">Vegetativ = 40 - 55</text><text x="824.20" y="501.60" font-size="10.2" fill="#000" textLength="66.80" lengthAdjust="spacing" stroke="#000" stroke-width="0.12">Blüte = 40 - 50</text><rect x="4.25" y="79.85" width="565.50" height="575.20" fill="none" stroke="#E8141C" stroke-width="4.5"/><rect x="585.45" y="71.55" width="87.70" height="583.90" fill="none" stroke="#2525C4" stroke-width="2.9"/><rect x="693.70" y="76.60" width="92.80" height="575.60" fill="none" stroke="#FF6A13" stroke-width="2.8"/><rect x="820.35" y="92.35" width="190.90" height="445.10" fill="none" stroke="#12A435" stroke-width="2.7"/></svg></body></html>
